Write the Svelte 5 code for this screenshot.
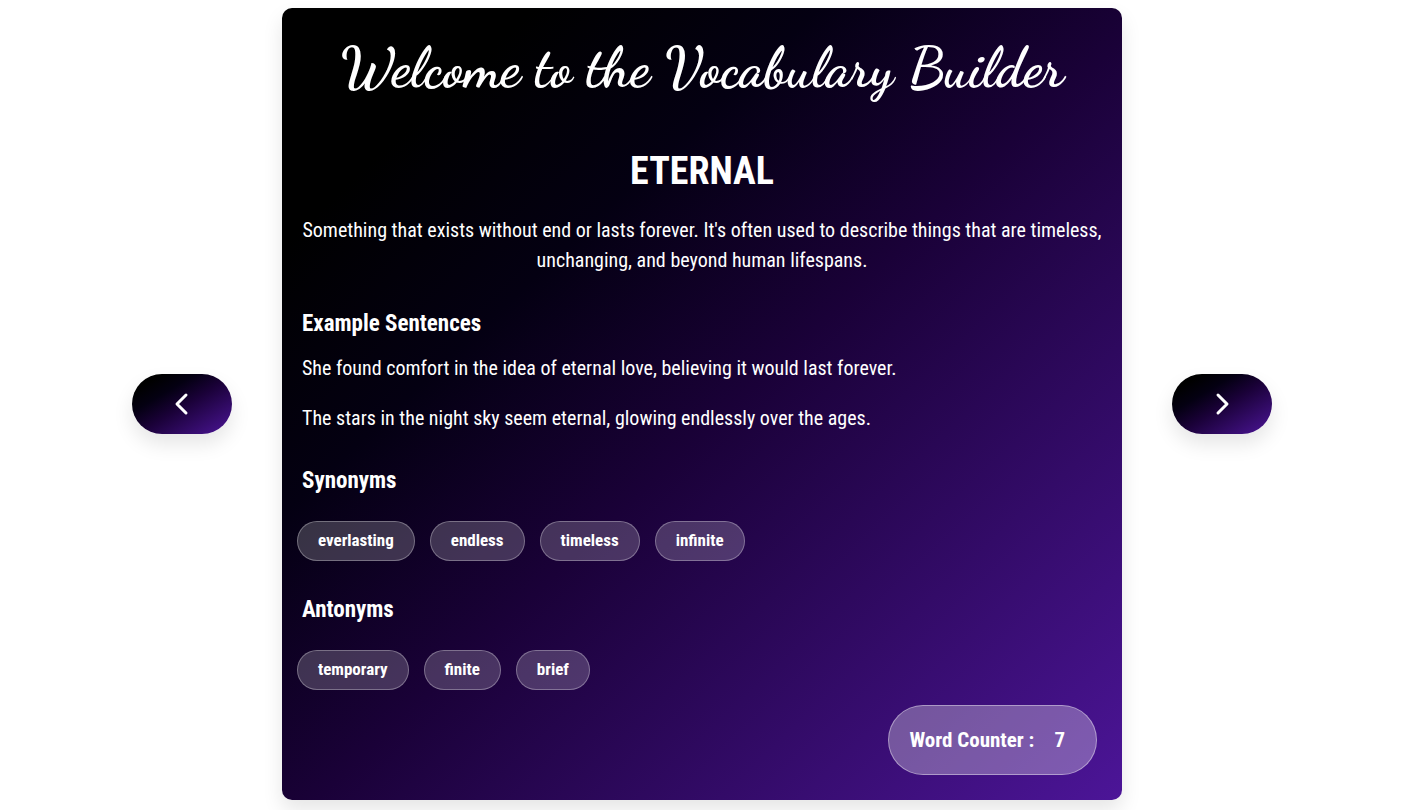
<script>
  const word = {
    name: 'ETERNAL',
    meaning: "Something that exists without end or lasts forever. It's often used to describe things that are timeless, unchanging, and beyond human lifespans.",
    examples: [
      'She found comfort in the idea of eternal love, believing it would last forever.',
      'The stars in the night sky seem eternal, glowing endlessly over the ages.'
    ],
    synonyms: ['everlasting', 'endless', 'timeless', 'infinite'],
    antonyms: ['temporary', 'finite', 'brief']
  };
  let counter = $state(7);
</script>

<main>
  <button class="nav" aria-label="Previous word" onclick={() => counter--}>
    <svg viewBox="0 0 24 24"><path d="M16 3 7 12l9 9" /></svg>
  </button>
  <article>
    <h1>Welcome to the Vocabulary Builder</h1>
    <h2>{word.name}</h2>
    <p class="meaning">{word.meaning}</p>
    <h3>Example Sentences</h3>
    {#each word.examples as example}
      <p class="example">{example}</p>
    {/each}
    <h3>Synonyms</h3>
    <ul>
      {#each word.synonyms as item}<li>{item}</li>{/each}
    </ul>
    <h3>Antonyms</h3>
    <ul>
      {#each word.antonyms as item}<li>{item}</li>{/each}
    </ul>
    <div class="counter"><span>Word Counter :</span><span>{counter}</span></div>
  </article>
  <button class="nav" aria-label="Next word" onclick={() => counter++}>
    <svg viewBox="0 0 24 24"><path d="m8 3 9 9-9 9" /></svg>
  </button>
</main>

<style>
  :global(body) { background: #fff; }
  main {
    --night: linear-gradient(to bottom right, #000 15%, #040012 32%, #1a0138 52%, #4c1598 100%);
    display: flex;
    justify-content: center;
    align-items: center;
    gap: 50px;
    padding: 8px 26px 10px 8px;
    font-family: "Roboto Condensed", Roboto, sans-serif;
    font-stretch: condensed;
    color: #fff;
  }
  article {
    box-sizing: border-box;
    flex: 0 1 840px;
    padding: 20px 20px 25px;
    border-radius: 10px;
    background: var(--night);
    box-shadow: 0 10px 20px rgba(0, 0, 0, 0.1);
    display: flex;
    flex-direction: column;
  }
  h1, h2, h3, p, ul { margin: 0; }
  h1 {
    font: 700 56px/80px "Dancing Script", "Brush Script MT", cursive;
    text-align: center;
  }
  h2 { margin-top: 40px; font-size: 38px; line-height: 46px; text-align: center; }
  .meaning { margin: 21px 0; text-align: center; }
  p { font-size: 20px; line-height: 30px; }
  h3 { font-size: 23px; line-height: 28px; margin: 14px 0 15px; }
  .example { margin-bottom: 20px; }
  ul { display: flex; flex-wrap: wrap; gap: 15px; margin: 11px -5px 21px; padding: 0; list-style: none; }
  li {
    padding: 0 20px 2px;
    border: 1px solid rgba(255, 255, 255, 0.3);
    border-radius: 20px;
    background: rgba(255, 255, 255, 0.2);
    font-size: 17px;
    font-weight: 700;
    line-height: 36px;
  }
  .counter {
    align-self: flex-end;
    display: flex;
    gap: 20px;
    margin: -6px 5px 0;
    padding: 0 31px 0 20px;
    border: 1px solid rgba(255, 255, 255, 0.4);
    border-radius: 35px;
    background: rgba(255, 255, 255, 0.3);
    font-size: 21px;
    font-weight: 700;
    line-height: 68px;
  }
  .nav {
    flex: none;
    display: flex;
    justify-content: center;
    align-items: center;
    width: 100px;
    height: 60px;
    border: 0;
    border-radius: 30px;
    background: var(--night);
    box-shadow: 0 10px 20px rgba(0, 0, 0, 0.1);
    cursor: pointer;
  }
  svg { width: 24px; height: 24px; fill: none; stroke: #fff; stroke-width: 3; stroke-linecap: round; stroke-linejoin: round; }
</style>
